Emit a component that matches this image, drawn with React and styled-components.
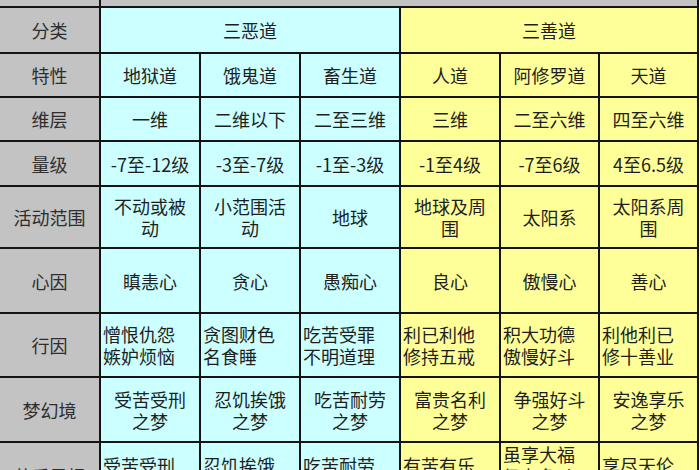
import React from 'react';
import styled, { createGlobalStyle } from 'styled-components';

const GlobalStyle = createGlobalStyle`
  html, body {
    margin: 0;
    padding: 0;
    background: #fff;
    overflow: hidden;
  }
  body {
    font-family: "Noto Sans CJK SC", "DejaVu Sans", sans-serif;
  }
`;

const fills = {
  label: '#c3c3c3',
  bad: '#ccffff',
  good: '#ffff99',
};

const rowHeights = [6, 44, 42, 42, 43, 60, 63, 62, 63, 66];

const sections = [
  { title: '三恶道', tone: 'bad' },
  { title: '三善道', tone: 'good' },
];

const rows = [
  { label: '特性', cells: ['地狱道', '饿鬼道', '畜生道', '人道', '阿修罗道', '天道'] },
  { label: '维层', cells: ['一维', '二维以下', '二至三维', '三维', '二至六维', '四至六维'] },
  { label: '量级', cells: ['-7至-12级', '-3至-7级', '-1至-3级', '-1至4级', '-7至6级', '4至6.5级'] },
  {
    label: '活动范围',
    cells: ['不动或被\n动', '小范围活\n动', '地球', '地球及周\n围', '太阳系', '太阳系周\n围'],
  },
  { label: '心因', cells: ['瞋恚心', '贪心', '愚痴心', '良心', '傲慢心', '善心'] },
  {
    label: '行因',
    align: 'left',
    cells: ['憎恨仇怨\n嫉妒烦恼', '贪图财色\n名食睡', '吃苦受罪\n不明道理', '利已利他\n修持五戒', '积大功德\n傲慢好斗', '利他利已\n修十善业'],
  },
  {
    label: '梦幻境',
    cells: ['受苦受刑\n之梦', '忍饥挨饿\n之梦', '吃苦耐劳\n之梦', '富贵名利\n之梦', '争强好斗\n之梦', '安逸享乐\n之梦'],
  },
  {
    label: '苦乐果报',
    align: 'left',
    cells: ['受苦受刑\n之果', '忍饥挨饿\n之果', '吃苦耐劳\n之果', '有苦有乐\n之果', '虽享大福\n仍有争斗\n之果', '享尽天伦\n之果'],
  },
];

function Lines({ text }) {
  return text.split('\n').map((line, i) => <Line key={i}>{line}</Line>);
}

function App() {
  return (
    <>
      <GlobalStyle />
      <Table>
        <Cell $tone="label" />
        <Cell $tone="label" $span={6} />

        <Cell $tone="label" $muted>分类</Cell>
        {sections.map((s) => (
          <Cell key={s.title} $tone={s.tone} $span={3}>
            {s.title}
          </Cell>
        ))}

        {rows.map((row) => (
          <React.Fragment key={row.label}>
            <Cell $tone="label" $muted>{row.label}</Cell>
            {row.cells.map((text, i) => (
              <Cell key={i} $tone={i < 3 ? 'bad' : 'good'} $align={row.align}>
                <Lines text={text} />
              </Cell>
            ))}
          </React.Fragment>
        ))}
      </Table>
    </>
  );
}

const Table = styled.div`
  display: grid;
  grid-template-columns: 99px 98px 98px 98px 98px 97px 97px;
  grid-template-rows: ${rowHeights.map((h) => `${h}px`).join(' ')};
  gap: 2px;
  width: 697px;
  padding-right: 2px;
  background: #141414;
  height: 470px;
  overflow: hidden;
`;

const Cell = styled.div`
  grid-column: span ${(p) => p.$span || 1};
  background: ${(p) => fills[p.$tone]};
  color: ${(p) => (p.$muted ? '#2e2e2e' : '#1e1e1e')};
  display: flex;
  flex-direction: column;
  justify-content: center;
  align-items: ${(p) => (p.$align === 'left' ? 'flex-start' : 'center')};
  padding-left: ${(p) => (p.$align === 'left' ? '2px' : '0')};
  font-size: 18px;
  line-height: 22px;
  white-space: nowrap;
  overflow: hidden;
`;

const Line = styled.span`
  display: block;
`;

export default App;
